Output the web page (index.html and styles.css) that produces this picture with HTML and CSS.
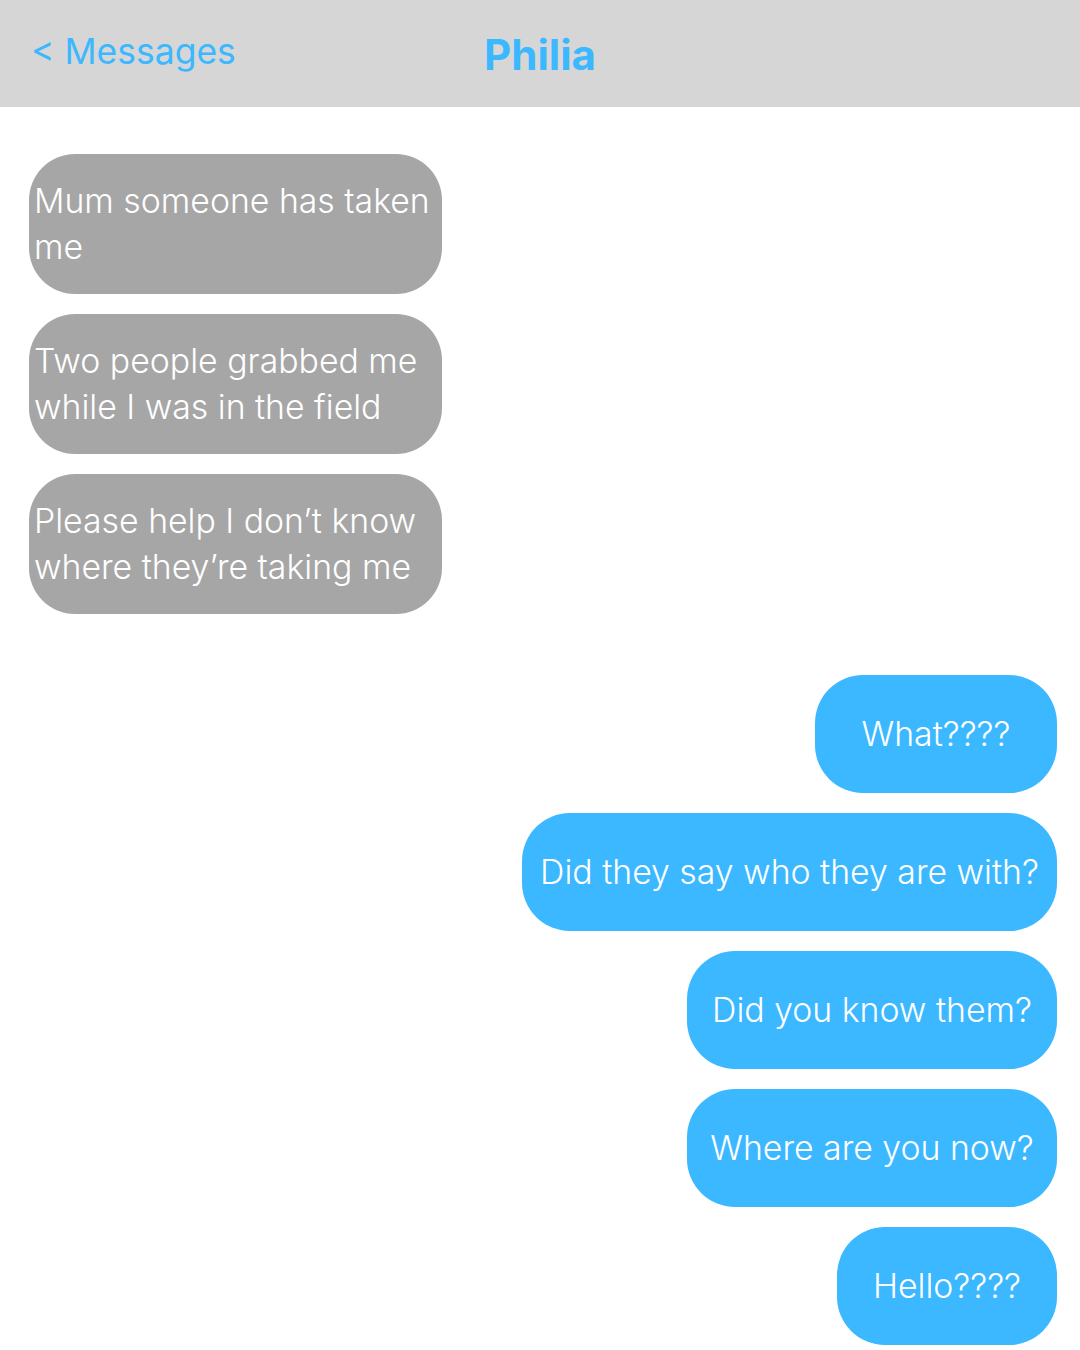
FILE: index.html
```html
<!DOCTYPE html>
<html lang="en">
<head>
<meta charset="utf-8">
<title>Philia</title>
<link rel="stylesheet" href="styles.css">
</head>
<body>
<header class="topbar">
  <span class="back">&lt; Messages</span>
  <span class="title">Philia</span>
</header>
<main class="thread">
  <section class="incoming">
    <div class="bubble in">Mum someone has taken me</div>
    <div class="bubble in">Two people grabbed me while I was in the field</div>
    <div class="bubble in">Please help I don’t know where they’re taking me</div>
  </section>
  <section class="outgoing">
    <div class="bubble out w-what">What????</div>
    <div class="bubble out w-did">Did they say who they are with?</div>
    <div class="bubble out w-know">Did you know them?</div>
    <div class="bubble out w-know">Where are you now?</div>
    <div class="bubble out w-hello">Hello????</div>
  </section>
</main>
</body>
</html>
```

FILE: styles.css
```css
* { box-sizing: border-box; }
html, body { margin: 0; padding: 0; }
body {
  width: 1080px;
  height: 1350px;
  background: #ffffff;
  font-family: "Inter", "Noto Sans", sans-serif;
  overflow: hidden;
}
.topbar {
  height: 107px;
  background: #d6d6d6;
  position: relative;
  display: flex;
  align-items: center;
  padding-left: 31px;
}
.back {
  font-family: "Inter", "Roboto", sans-serif;
  font-size: 35.5px;
  font-weight: 400;
  color: #3bb8ff;
  margin-top: -4px;
}
.title {
  position: absolute;
  left: 0;
  right: 0;
  top: 28px;
  text-align: center;
  font-family: "Inter", sans-serif;
  font-weight: 700;
  font-size: 42px;
  color: #3bb8ff;
  line-height: 54px;
}
.thread {
  padding: 47px 23px 0 29px;
  display: flex;
  flex-direction: column;
  gap: 61px;
}
.incoming, .outgoing {
  display: flex;
  flex-direction: column;
  gap: 20px;
}
.outgoing { align-items: flex-end; }
.bubble {
  color: #ffffff;
  font-weight: 300;
  font-size: 33.8px;
  line-height: 46px;
  display: flex;
  align-items: center;
}
.in {
  width: 413px;
  height: 140px;
  background: #a6a6a6;
  border-radius: 46px;
  padding: 0 6px 0 5px;
}
.out {
  height: 118px;
  background: #3bb8ff;
  border-radius: 48px;
  justify-content: center;
}
.w-what { width: 242px; }
.w-did { width: 535px; }
.w-know { width: 370px; }
.w-hello { width: 220px; }
```
